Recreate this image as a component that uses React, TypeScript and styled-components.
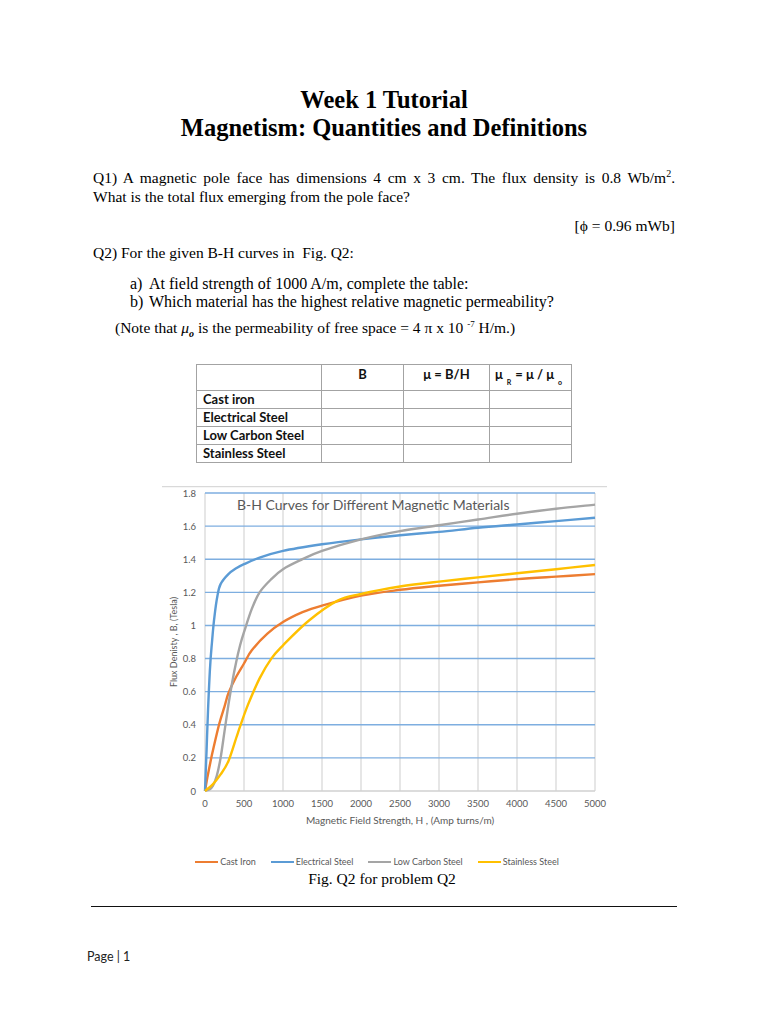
import React from "react"
import styled, { createGlobalStyle } from "styled-components"

const Global = createGlobalStyle`
    body {
        margin: 0;
        background: #ffffff;
        font-family: "Liberation Serif", "Times New Roman", serif;
        color: #000000;
    }
    sub, sup {
        line-height: 0;
    }
`

const Sheet = styled.div`
    width: 768px;
    min-height: 1024px;
    box-sizing: border-box;
    padding: 86px 93px 0 93px;
`

const Heading = styled.h1`
    margin: 0;
    text-align: center;
    font-weight: 700;
    font-size: 24.5px;
    line-height: 28px;
`

const Para = styled.p<{ $top: number; $align?: string }>`
    margin: ${({ $top }) => $top}px 0 0 0;
    font-size: 15.5px;
    line-height: 19px;
    text-align: ${({ $align }) => $align || "left"};
`

const JustLine = styled.span`
    display: block;
    text-align: justify;
    text-align-last: justify;
`

const List = styled.div`
    margin: 13px 0 0 37px;
    display: grid;
    grid-template-columns: 19px 1fr;
    font-size: 16px;
    line-height: 17.5px;
`

const Note = styled.p`
    margin: 8px 0 0 22px;
    font-size: 15.5px;
    line-height: 19px;

    sub {
        font-size: 10px;
        font-style: italic;
        font-weight: 700;
    }
    sup {
        font-size: 9px;
    }
`

const Table = styled.table`
    margin: 27px auto 0 auto;
    border-collapse: collapse;
    table-layout: fixed;
    font-family: Lato, "Liberation Sans", sans-serif;
    font-size: 13px;
    font-weight: 700;
    color: #111;

    td, th {
        border: 1px solid #a3a3a3;
        padding: 0 6px;
        height: 17px;
        line-height: 17px;
        white-space: nowrap;
    }
    th {
        height: 26px;
        box-sizing: border-box;
        vertical-align: top;
        padding: 1px 2px 0 2px;
        line-height: 16px;
        text-align: center;
        font-weight: 700;
    }
    th sub {
        font-size: 7px;
        margin: 0 4px;
        vertical-align: -6px;
    }
`

const Col = styled.col<{ $w: number }>`
    width: ${({ $w }) => $w}px;
`

const Figure = styled.figure`
    margin: 23px auto 0 auto;
    width: 445px;
    display: flex;
    flex-direction: column;
    align-items: center;
`

const Legend = styled.div`
    margin-top: 27px;
    display: flex;
    gap: 15px;
    margin-left: -14px;
    font-family: Lato, "Liberation Sans", sans-serif;
    font-size: 9px;
    line-height: 12px;
    color: #595959;
`

const LegendItem = styled.span<{ $color: string }>`
    display: flex;
    align-items: center;
    gap: 2px;

    &::before {
        content: "";
        width: 23px;
        height: 2.5px;
        background: ${({ $color }) => $color};
    }
`

const Caption = styled.figcaption`
    margin-top: 1px;
    margin-left: -4px;
    font-size: 15.5px;
    line-height: 20px;
`

const Rule = styled.hr`
    margin: 17px -2px 0 -2px;
    border: none;
    border-top: 1px solid #111;
    height: 0;
`

const Footer = styled.div`
    margin: 42px 0 0 -6px;
    font-family: Lato, "Liberation Sans", sans-serif;
    font-size: 12.5px;
    color: #222;
`

type Pt = [number, number]

const series: { name: string; color: string; pts: Pt[] }[] = [
    {
        name: "Cast Iron",
        color: "#ed7d31",
        pts: [[0, 0], [30, 0.08], [90, 0.22], [180, 0.4], [250, 0.51], [300, 0.59], [400, 0.69], [500, 0.77], [600, 0.85], [800, 0.95], [1000, 1.02], [1250, 1.08], [1500, 1.12], [2000, 1.18], [2500, 1.215], [3000, 1.24], [3500, 1.26], [4000, 1.28], [4500, 1.295], [5000, 1.31]],
    },
    {
        name: "Electrical Steel",
        color: "#5b9bd5",
        pts: [[0, 0], [20, 0.25], [40, 0.5], [65, 0.75], [90, 0.9], [120, 1.05], [160, 1.18], [200, 1.25], [300, 1.31], [400, 1.345], [500, 1.37], [700, 1.41], [1000, 1.45], [1500, 1.49], [2000, 1.52], [2500, 1.545], [3000, 1.565], [3500, 1.59], [4000, 1.61], [4500, 1.63], [5000, 1.65]],
    },
    {
        name: "Low Carbon Steel",
        color: "#a5a5a5",
        pts: [[0, 0], [60, 0.01], [100, 0.03], [150, 0.09], [200, 0.2], [250, 0.36], [300, 0.52], [350, 0.66], [400, 0.78], [450, 0.88], [500, 0.96], [600, 1.1], [700, 1.2], [850, 1.28], [1000, 1.34], [1250, 1.4], [1500, 1.45], [2000, 1.52], [2500, 1.57], [3000, 1.605], [3500, 1.64], [4000, 1.675], [4500, 1.705], [5000, 1.73]],
    },
    {
        name: "Stainless Steel",
        color: "#ffc000",
        pts: [[0, 0], [100, 0.04], [200, 0.1], [300, 0.18], [400, 0.32], [450, 0.39], [550, 0.52], [700, 0.68], [850, 0.8], [1000, 0.88], [1333, 1.03], [1700, 1.15], [2000, 1.19], [2500, 1.235], [3000, 1.265], [3500, 1.29], [4000, 1.315], [4500, 1.34], [5000, 1.365]],
    },
]

// plot box inside the svg
const L = 43, R = 433, T = 7, B = 305
const sx = (h: number) => L + (h / 5000) * (R - L)
const sy = (b: number) => B - (b / 1.8) * (B - T)

// catmull-rom through the points, as cubic beziers
function smooth(pts: Pt[]) {
    const p = pts.map(([h, b]) => [sx(h), sy(b)])
    let d = `M${p[0][0].toFixed(1)},${p[0][1].toFixed(1)}`
    for (let i = 0; i < p.length - 1; i++) {
        const p0 = p[i - 1] || p[i]
        const p1 = p[i]
        const p2 = p[i + 1]
        const p3 = p[i + 2] || p2
        const c1 = [p1[0] + (p2[0] - p0[0]) / 6, p1[1] + (p2[1] - p0[1]) / 6]
        const c2 = [p2[0] - (p3[0] - p1[0]) / 6, p2[1] - (p3[1] - p1[1]) / 6]
        d += ` C${c1[0].toFixed(1)},${c1[1].toFixed(1)} ${c2[0].toFixed(1)},${c2[1].toFixed(1)} ${p2[0].toFixed(1)},${p2[1].toFixed(1)}`
    }
    return d
}

const xs = [0, 500, 1000, 1500, 2000, 2500, 3000, 3500, 4000, 4500, 5000]
const ys = ["0", "0.2", "0.4", "0.6", "0.8", "1", "1.2", "1.4", "1.6", "1.8"]

function Chart() {
    const font = "Lato, 'Liberation Sans', sans-serif"
    return (
        <svg width="445" height="343" viewBox="0 0 445 343">
            <line x1="0" y1="0.5" x2="445" y2="0.5" stroke="#d9d9d9" strokeWidth="1.5" />
            {xs.map((h) => (
                <line key={h} x1={sx(h)} y1={T} x2={sx(h)} y2={B} stroke="#d9d9d9" strokeWidth="1.3" />
            ))}
            {ys.map((v) => Number(v) > 0 && (
                <line key={v} x1={L} y1={sy(Number(v))} x2={R} y2={sy(Number(v))} stroke="#7eaee0" strokeWidth="1.4" />
            ))}
            <line x1={L} y1={B} x2={R} y2={B} stroke="#d0d0d0" strokeWidth="1.3" />
            <text x="75" y="24" fontFamily={font} fontSize="14" fill="#595959">B-H Curves for Different Magnetic Materials</text>
            {series.map((s) => (
                <path key={s.name} d={smooth(s.pts)} fill="none" stroke={s.color} strokeWidth="2.4" strokeLinejoin="round" />
            ))}
            {ys.map((v) => (
                <text key={v} x="34" y={sy(Number(v)) + 3.5} textAnchor="end" fontFamily={font} fontSize="9.5" fill="#595959">{v}</text>
            ))}
            {xs.map((h) => (
                <text key={h} x={sx(h)} y="321" textAnchor="middle" fontFamily={font} fontSize="9.5" fill="#595959">{h}</text>
            ))}
            <text x="238" y="338" textAnchor="middle" fontFamily={font} fontSize="10" fill="#595959">Magnetic Field Strength, H , (Amp turns/m)</text>
            <text x="0" y="0" transform="translate(15,156) rotate(-90)" textAnchor="middle" fontFamily={font} fontSize="9" fill="#595959">Flux Denisty , B, (Tesla)</text>
        </svg>
    )
}

export default function App() {
    return (
        <Sheet>
            <Global />
            <Heading>
                Week 1 Tutorial
                <br />
                Magnetism: Quantities and Definitions
            </Heading>

            <Para $top={26}>
                <JustLine>
                    Q1) A magnetic pole face has dimensions 4 cm x 3 cm. The flux density is 0.8 Wb/m<sup style={{ fontSize: 10 }}>2</sup>.
                </JustLine>
                What is the total flux emerging from the pole face?
            </Para>
            <Para $top={10} $align="right">[ϕ = 0.96 mWb]</Para>

            <Para $top={8}>Q2) For the given B-H curves in&nbsp; Fig. Q2:</Para>
            <List>
                <span>a)</span>
                <span>At field strength of 1000 A/m, complete the table:</span>
                <span>b)</span>
                <span>Which material has the highest relative magnetic permeability?</span>
            </List>
            <Note>
                (Note that <i>μ</i><sub>o</sub> is the permeability of free space = 4 π x 10 <sup>-7</sup> H/m.)
            </Note>

            <Table>
                <colgroup>
                    <Col $w={125} />
                    <Col $w={82} />
                    <Col $w={86} />
                    <Col $w={82} />
                </colgroup>
                <thead>
                    <tr>
                        <th></th>
                        <th>B</th>
                        <th>μ = B/H</th>
                        <th>μ<sub>R</sub>= μ / μ<sub>o</sub></th>
                    </tr>
                </thead>
                <tbody>
                    {["Cast iron", "Electrical Steel", "Low Carbon Steel", "Stainless Steel"].map((m) => (
                        <tr key={m}>
                            <td>{m}</td>
                            <td></td>
                            <td></td>
                            <td></td>
                        </tr>
                    ))}
                </tbody>
            </Table>

            <Figure>
                <Chart />
                <Legend>
                    {series.map((s) => (
                        <LegendItem key={s.name} $color={s.color}>{s.name}</LegendItem>
                    ))}
                </Legend>
                <Caption>Fig. Q2 for problem Q2</Caption>
            </Figure>

            <Rule />
            <Footer>Page | 1</Footer>
        </Sheet>
    )
}
